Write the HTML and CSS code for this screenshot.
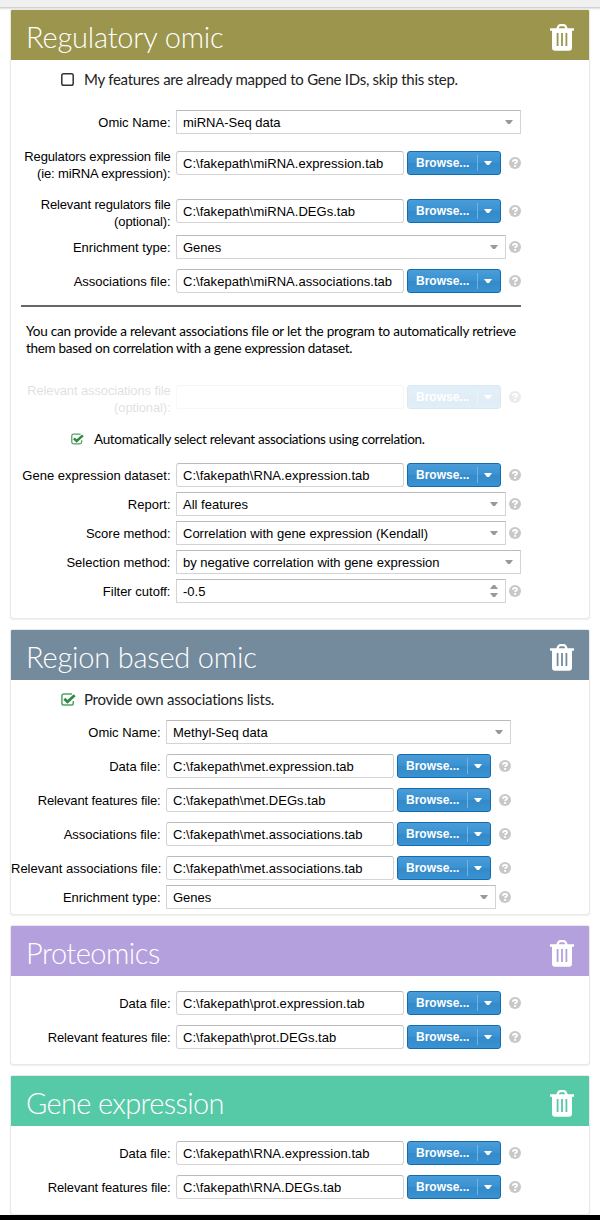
FILE: index.html
```
<!DOCTYPE html>
<html lang="en">
<head>
<meta charset="utf-8">
<title>Omics data upload</title>
<link rel="stylesheet" href="styles.css">
</head>
<body>
<svg class="defs" width="0" height="0">
  <symbol id="trash" viewBox="0 0 24 27">
    <path fill="currentColor" fill-rule="evenodd" d="M0 4.2H6.3L7.6 1.6Q8.4 0 10 0H14Q15.6 0 16.4 1.6L17.7 4.2H24V6.8H22V23.5Q22 26.8 19 26.8H5Q2 26.8 2 23.5V6.8H0ZM8.8 4.2H15.2L14.6 2.9Q14.3 2.3 13.6 2.3H10.4Q9.7 2.3 9.4 2.9ZM6.7 9V22H8.5V9ZM11.1 9V22H12.9V9ZM15.5 9V22H17.3V9Z"/>
  </symbol>
  <symbol id="help" viewBox="0 0 12 12">
    <circle cx="6" cy="6" r="6" fill="#c8c8c8"/>
    <path d="M3.9 4.7Q4 2.9 6 2.9Q8.1 3 8 4.5Q7.9 5.4 6.8 5.8Q6.1 6.1 6.1 7.1" fill="none" stroke="#fff" stroke-width="1.9"/>
    <path d="M5.1 8H7.1V9.8H5.1Z" fill="#fff"/>
  </symbol>
  <symbol id="checked" viewBox="0 0 15 13">
    <path d="M11 .9H3Q.9.9.9 3V10Q.9 12.1 3 12.1H10.2Q12.3 12.1 12.3 10V8" fill="none" stroke="#55a163" stroke-width="1.5"/>
    <path d="M3.3 5.8L6.5 8.8L13.7 2.2" fill="none" stroke="#2f8a43" stroke-width="2.8"/>
  </symbol>
  <symbol id="unchecked" viewBox="0 0 13 13">
    <rect x=".8" y=".8" width="11.4" height="11.4" rx="1.8" fill="none" stroke="#333" stroke-width="1.5"/>
  </symbol>
  <symbol id="down" viewBox="0 0 8 4"><path d="M0 0H8L5 4H3Z" fill="currentColor"/></symbol>
</svg>

<div class="topbar"></div>
<main class="panels">
  <section class="panel regulatory">
    <header class="panel-head"><h2>Regulatory omic</h2><svg class="trash"><use href="#trash"/></svg></header>
    <div class="check"><svg class="box"><use href="#unchecked"/></svg><span>My features are already mapped to Gene IDs, skip this step.</span></div>
    <div class="row gap-l"><label>Omic Name:</label><div class="combo wide">miRNA-Seq data<svg class="arrow"><use href="#down"/></svg></div></div>
    <div class="row gap-17"><label class="two tight">Regulators expression file<br>(ie: miRNA expression):</label><div class="file">C:\fakepath\miRNA.expression.tab</div><div class="browse"><span>Browse...</span><i></i><svg><use href="#down"/></svg></div><svg class="help"><use href="#help"/></svg></div>
    <div class="row gap-24"><label class="two tight">Relevant regulators file<br>(optional):</label><div class="file">C:\fakepath\miRNA.DEGs.tab</div><div class="browse"><span>Browse...</span><i></i><svg><use href="#down"/></svg></div><svg class="help"><use href="#help"/></svg></div>
    <div class="row gap-12"><label>Enrichment type:</label><div class="combo">Genes<svg class="arrow"><use href="#down"/></svg></div><svg class="help near"><use href="#help"/></svg></div>
    <div class="row gap-10"><label>Associations file:</label><div class="file">C:\fakepath\miRNA.associations.tab</div><div class="browse"><span>Browse...</span><i></i><svg><use href="#down"/></svg></div><svg class="help"><use href="#help"/></svg></div>
    <hr>
    <p class="note"><span class="note-a">You can provide a relevant associations file or let the program to automatically retrieve</span><br><span class="note-b">them based on correlation with a gene expression dataset.</span></p>
    <div class="row disabled"><label class="two tight">Relevant associations file<br>(optional):</label><div class="file"></div><div class="browse"><span>Browse...</span><i></i><svg><use href="#down"/></svg></div><svg class="help"><use href="#help"/></svg></div>
    <div class="check small"><svg class="box"><use href="#checked"/></svg><span>Automatically select relevant associations using correlation.</span></div>
    <div class="row gap-12"><label>Gene expression dataset:</label><div class="file">C:\fakepath\RNA.expression.tab</div><div class="browse"><span>Browse...</span><i></i><svg><use href="#down"/></svg></div><svg class="help"><use href="#help"/></svg></div>
    <div class="row gap-5"><label>Report:</label><div class="combo">All features<svg class="arrow"><use href="#down"/></svg></div><svg class="help near"><use href="#help"/></svg></div>
    <div class="row gap-5"><label>Score method:</label><div class="combo">Correlation with gene expression (Kendall)<svg class="arrow"><use href="#down"/></svg></div><svg class="help near"><use href="#help"/></svg></div>
    <div class="row gap-5"><label>Selection method:</label><div class="combo wide">by negative correlation with gene expression<svg class="arrow"><use href="#down"/></svg></div></div>
    <div class="row gap-5"><label>Filter cutoff:</label><div class="combo">-0.5<span class="spin"><svg class="up"><use href="#down"/></svg><svg><use href="#down"/></svg></span></div><svg class="help near"><use href="#help"/></svg></div>
  </section>

  <section class="panel region">
    <header class="panel-head"><h2>Region based omic</h2><svg class="trash"><use href="#trash"/></svg></header>
    <div class="check"><svg class="box"><use href="#checked"/></svg><span>Provide own associations lists.</span></div>
    <div class="row gap-9"><label>Omic Name:</label><div class="combo wide">Methyl-Seq data<svg class="arrow"><use href="#down"/></svg></div></div>
    <div class="row gap-10"><label>Data file:</label><div class="file">C:\fakepath\met.expression.tab</div><div class="browse"><span>Browse...</span><i></i><svg><use href="#down"/></svg></div><svg class="help"><use href="#help"/></svg></div>
    <div class="row gap-10"><label class="tight">Relevant features file:</label><div class="file">C:\fakepath\met.DEGs.tab</div><div class="browse"><span>Browse...</span><i></i><svg><use href="#down"/></svg></div><svg class="help"><use href="#help"/></svg></div>
    <div class="row gap-10"><label>Associations file:</label><div class="file">C:\fakepath\met.associations.tab</div><div class="browse"><span>Browse...</span><i></i><svg><use href="#down"/></svg></div><svg class="help"><use href="#help"/></svg></div>
    <div class="row gap-10"><label>Relevant associations file:</label><div class="file">C:\fakepath\met.associations.tab</div><div class="browse"><span>Browse...</span><i></i><svg><use href="#down"/></svg></div><svg class="help"><use href="#help"/></svg></div>
    <div class="row gap-5"><label>Enrichment type:</label><div class="combo">Genes<svg class="arrow"><use href="#down"/></svg></div><svg class="help near"><use href="#help"/></svg></div>
  </section>

  <section class="panel proteomics">
    <header class="panel-head"><h2>Proteomics</h2><svg class="trash"><use href="#trash"/></svg></header>
    <div class="row gap-15"><label>Data file:</label><div class="file">C:\fakepath\prot.expression.tab</div><div class="browse"><span>Browse...</span><i></i><svg><use href="#down"/></svg></div><svg class="help"><use href="#help"/></svg></div>
    <div class="row gap-10"><label class="tight">Relevant features file:</label><div class="file">C:\fakepath\prot.DEGs.tab</div><div class="browse"><span>Browse...</span><i></i><svg><use href="#down"/></svg></div><svg class="help"><use href="#help"/></svg></div>
  </section>

  <section class="panel expression">
    <header class="panel-head"><h2>Gene expression</h2><svg class="trash"><use href="#trash"/></svg></header>
    <div class="row gap-15"><label>Data file:</label><div class="file">C:\fakepath\RNA.expression.tab</div><div class="browse"><span>Browse...</span><i></i><svg><use href="#down"/></svg></div><svg class="help"><use href="#help"/></svg></div>
    <div class="row gap-10"><label class="tight">Relevant features file:</label><div class="file">C:\fakepath\RNA.DEGs.tab</div><div class="browse"><span>Browse...</span><i></i><svg><use href="#down"/></svg></div><svg class="help"><use href="#help"/></svg></div>
  </section>
</main>
<footer class="bottombar"></footer>
</body>
</html>
```
FILE: styles.css
```
* { box-sizing: border-box; }
body {
  margin: 0;
  width: 600px;
  height: 1220px;
  overflow: hidden;
  display: flex;
  flex-direction: column;
  background: #fff;
  color: #000;
  font: 13px/17px "Liberation Sans", Arial, sans-serif;
}
svg { display: block; flex: none; }
.defs { position: absolute; }
.topbar { flex: none; height: 8px; background: #f0f0f0; border-bottom: 1px solid #d2d2d2; box-shadow: 0 1px 2px #ddd; }
.panels { flex: none; height: 1207px; padding: 2px 11px 0; display: flex; flex-direction: column; gap: 12px; overflow: hidden; }
.panel { flex: none; border-radius: 2px; box-shadow: 0 0 0 1px #e9e9e9, 0 1px 2px 1px #eee; }
.regulatory { height: 608px; }
.region { height: 284px; }
.proteomics { height: 138px; }
.expression { height: 138px; }
.panel-head { height: 50px; padding: 0 15px; display: flex; justify-content: space-between; align-items: flex-start; color: #fff; border-radius: 1px 1px 0 0; }
.regulatory .panel-head { background: #9b954d; }
.region .panel-head { background: #748a9d; }
.proteomics .panel-head { background: #b4a0dd; }
.expression .panel-head { background: #56c9a6; }
h2 { margin: 9px 0 0; font: 300 29px/36px Lato, sans-serif; letter-spacing: -.2px; white-space: nowrap; }
.proteomics h2 { letter-spacing: -.5px; }
.expression h2 { letter-spacing: -.65px; }
.trash { width: 24px; height: 27px; margin-top: 14px; }

.check { display: flex; align-items: center; height: 24px; margin-top: 7px; padding-left: 50px; font: 15px/24px Lato, sans-serif; color: #222; white-space: nowrap; }
.box { width: 15px; height: 13px; margin-right: 8px; }
.check .box + span { letter-spacing: -.27px; }
.regulatory .check:not(.small) .box { width: 13px; height: 13px; margin-right: 10px; }
.check.small { margin: 18px 0 0; padding-left: 60px; font-size: 13.5px; color: #000; }
.small .box { width: 13px; height: 12px; margin-right: 10px; }
.check.small .box + span { letter-spacing: -.32px; }

.row { display: flex; align-items: center; height: 24px; }
label { flex: none; width: 159.5px; margin-right: 5.5px; text-align: right; white-space: nowrap; }
.region label { width: 149.5px; }
.two { align-self: flex-start; margin-top: -3px; }
.tight { letter-spacing: -.04px; }
label.tight { letter-spacing: -.13px; }
.gap-5 { margin-top: 5px; }
.gap-9 { margin-top: 9px; }
.gap-10 { margin-top: 10px; }
.gap-12 { margin-top: 12px; }
.gap-15 { margin-top: 15px; }
.gap-17 { margin-top: 17px; }
.gap-l { margin-top: 19px; }
.gap-24 { margin-top: 24px; }

.combo, .file { flex: none; height: 24px; padding: 0 6px; border: 1px solid #d4d4d4; border-top-color: #bbb; line-height: 23px; white-space: nowrap; }
.combo { width: 330px; display: flex; align-items: center; justify-content: space-between; }
.combo.wide { width: 345px; }
.file { width: 228px; border-radius: 3px; letter-spacing: .03px; }
.arrow { width: 8px; height: 4px; margin-right: 1px; color: #999; }
.spin { display: grid; gap: 4px; margin-right: 1px; color: #999; }
.spin svg { width: 8px; height: 4px; }
.up { transform: scaleY(-1); }
.browse { flex: none; display: flex; align-items: center; width: 94px; height: 24px; margin-left: 3px; padding-left: 8px; border: 1px solid #126daf; border-radius: 3px; background: linear-gradient(#4b9cd7, #3892d3 50%, #358ac8 51%, #3892d3); color: #fff; font-weight: bold; font-size: 12px; }
.browse span { width: 61px; line-height: 22px; letter-spacing: 0; }
.browse i { width: 1px; height: 16px; background: #70b2e0; }
.browse svg { width: 8px; height: 4px; margin-left: 6px; }
.help { width: 12px; height: 12px; margin-left: 8px; }
.near { margin-left: 3px; }
.disabled { margin-top: 28px; }
.disabled > * { opacity: .15; }
.disabled > .help { opacity: .35; }
.disabled > label { opacity: .12; }
hr { width: 500px; height: 2px; margin: 12px 0 0 10px; border: 0; background: #666; }
.note { margin: 16px 0 0 15px; font: 13.5px/17px Lato, sans-serif; white-space: nowrap; }
.note-a { letter-spacing: -.22px; }
.note-b { letter-spacing: -.3px; }
.bottombar { flex: none; height: 5px; background: #000; }
```
